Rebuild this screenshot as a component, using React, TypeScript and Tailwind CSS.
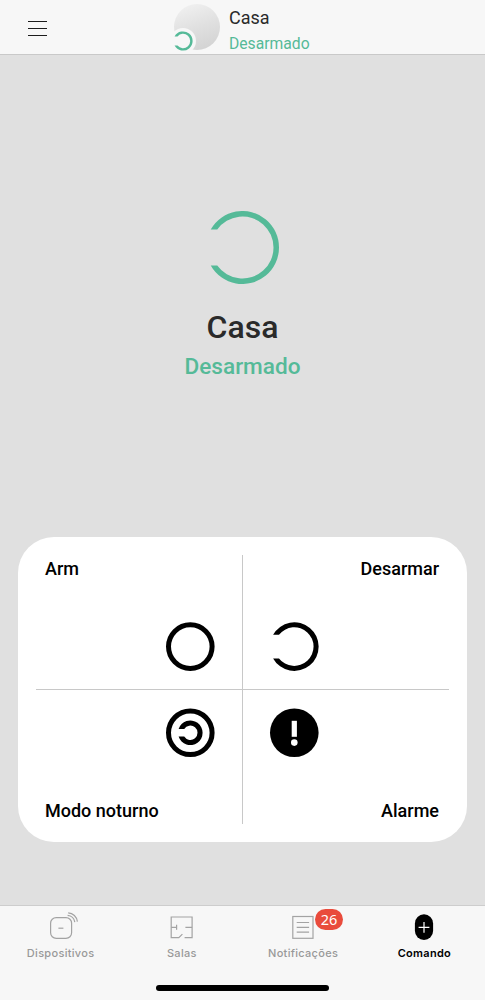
import React from 'react';

interface OpenRingProps {
  outer: number;
  inner: number;
  gap: number;
  className?: string;
}

// Ring with a slot cut out of its left side
function OpenRing({ outer, inner, gap, className }: OpenRingProps) {
  const xo = -Math.sqrt(outer * outer - gap * gap);
  const xi = -Math.sqrt(inner * inner - gap * gap);
  const d = `M${xo} ${-gap}A${outer} ${outer} 0 1 1 ${xo} ${gap}L${xi} ${gap}A${inner} ${inner} 0 1 0 ${xi} ${-gap}Z`;
  const size = Math.ceil(outer * 2);

  return (
    <svg
      width={size}
      height={size}
      viewBox={`${-size / 2} ${-size / 2} ${size} ${size}`}
      fill="currentColor"
      className={className}
    >
      <path d={d} />
    </svg>
  );
}

function ArmIcon() {
  return (
    <svg width="50" height="50" viewBox="-25.3 -25.6 50 50" fill="none" stroke="currentColor">
      <circle r="21.8" strokeWidth="5" />
    </svg>
  );
}

function DisarmIcon() {
  return (
    <svg width="50" height="50" viewBox="-25.3 -25.6 50 50" fill="currentColor">
      <path d="M-21.2 -11.8A24.3 24.3 0 1 1 -21.2 11.8L-15.3 11.8A19.3 19.3 0 1 0 -15.3 -11.8Z" />
    </svg>
  );
}

function NightIcon() {
  return (
    <svg width="50" height="50" viewBox="-25.3 -24.8 50 50" fill="currentColor">
      <circle r="21.8" strokeWidth="5" fill="none" stroke="currentColor" />
      <path d="M-11.7 -3.8A12.3 12.3 0 1 1 -11.7 3.8L-6.1 3.8A7.2 7.2 0 1 0 -6.1 -3.8Z" />
    </svg>
  );
}

function AlarmIcon() {
  return (
    <svg width="50" height="50" viewBox="-25.3 -24.8 50 50">
      <circle r="24.3" fill="#000" />
      <rect x="-2.6" y="-12" width="5.2" height="16" fill="#fff" />
      <circle cy="9.8" r="3.3" fill="#fff" />
    </svg>
  );
}

function DevicesIcon() {
  return (
    <svg width="40" height="32" viewBox="0 0 40 32" fill="none" stroke="#a3a3a3" strokeWidth="1.2">
      <rect x="9.6" y="7.6" width="21" height="20.8" rx="5.6" />
      <path d="M17.4 18.2h5" />
      <path d="M27.2 2.8A10 10 0 0 1 36.4 11.6M26.6 5.4A7.8 7.8 0 0 1 33.8 12.2" />
    </svg>
  );
}

function RoomsIcon() {
  return (
    <svg width="40" height="32" viewBox="0 0 40 32" fill="none" stroke="#a3a3a3" strokeWidth="1.2">
      <path d="M22.6 27.6h7.5V7H9.2v20.6h7.6l3.6-3.5" />
      <path d="M9.2 17.4h5.2M14.6 14.8v5M23.4 17.4h6.7" />
    </svg>
  );
}

function NotificationsIcon() {
  return (
    <svg width="40" height="32" viewBox="0 0 40 32" fill="none" stroke="#a3a3a3" strokeWidth="1.2">
      <rect x="9.8" y="6.5" width="20.2" height="21.8" />
      <path d="M13.7 12.5h12.4M13.7 17.4h12.4M13.7 22.2h12.4" />
    </svg>
  );
}

function ControlIcon() {
  return (
    <svg width="40" height="32" viewBox="0 0 40 32">
      <rect x="10.9" y="4.3" width="18.2" height="25.6" rx="9.1" fill="#000" />
      <path d="M20 11.9v10.8M14.6 17.3h10.8" stroke="#fff" strokeWidth="1.2" />
    </svg>
  );
}

const tabs = [
  { label: 'Dispositivos', icon: <DevicesIcon /> },
  { label: 'Salas', icon: <RoomsIcon /> },
  { label: 'Notificações', icon: <NotificationsIcon />, badge: 26 },
  { label: 'Comando', icon: <ControlIcon />, active: true },
];

export default function App() {
  return (
    <div className="flex h-[1000px] w-[485px] flex-col overflow-hidden bg-[#e0e0e0] font-['Roboto',sans-serif]">
      <header className="flex h-[55px] shrink-0 items-start border-b border-[#c9c9c9] bg-[#f7f7f7]">
        <button className="mt-[21px] ml-[28px] flex w-[19px] flex-col gap-[6px]" aria-label="Menu">
          <span className="h-px w-full bg-[#1c1c1c]" />
          <span className="h-px w-full bg-[#1c1c1c]" />
          <span className="h-px w-full bg-[#1c1c1c]" />
        </button>

        <div className="ml-[127px] flex">
          <div className="relative mt-[4px] size-[46px] rounded-full bg-linear-160 from-[#f3f3f3] via-[#e0e0e0] to-[#d0d0d0]">
            <span className="absolute top-[24px] left-[-4px] flex size-[26px] items-center justify-center rounded-full bg-[#f7f7f7] text-[#55ba98]">
              <OpenRing outer={9.6} inner={7.2} gap={4.6} />
            </span>
          </div>
          <div className="ml-[9px] flex flex-col">
            <span className="mt-[6px] text-[18px] leading-[24px] text-[#2a2a2a]">Casa</span>
            <span className="mt-[4px] text-[15.7px] leading-[20px] text-[#55ba98]">Desarmado</span>
          </div>
        </div>
      </header>

      <main className="flex grow flex-col items-center px-[18px]">
        <OpenRing outer={36.5} inner={31} gap={18} className="mt-[156px] text-[#55ba98]" />
        <h1 className="mt-[23px] text-[32px] leading-[40px] font-medium text-[#2a2a2a]">Casa</h1>
        <p className="mt-[6px] text-[22.6px] leading-[28px] font-medium text-[#55ba98]">Desarmado</p>

        <section className="mt-auto mb-[63px] flex h-[305px] w-full flex-col rounded-[36px] bg-white px-[18px] py-[18px] text-[18px] leading-[24px] font-medium text-black">
          <div className="grid h-[134px] grid-cols-[206px_1px_206px]">
            <button className="flex flex-col justify-between pt-[2px] pr-[27px] pb-[18px] pl-[9px]">
              <span className="self-start">Arm</span>
              <span className="self-end"><ArmIcon /></span>
            </button>
            <span className="bg-[#c8c8c8]" />
            <button className="flex flex-col justify-between pt-[2px] pr-[10px] pb-[18px] pl-[26px]">
              <span className="self-end">Desarmar</span>
              <span className="self-start"><DisarmIcon /></span>
            </button>
          </div>
          <span className="h-px w-full bg-[#c8c8c8]" />
          <div className="grid h-[134px] grid-cols-[206px_1px_206px]">
            <button className="flex flex-col justify-between pt-[18px] pr-[27px] pb-px pl-[9px]">
              <span className="self-end"><NightIcon /></span>
              <span className="self-start">Modo noturno</span>
            </button>
            <span className="bg-[#c8c8c8]" />
            <button className="flex flex-col justify-between pt-[18px] pr-[10px] pb-px pl-[26px]">
              <span className="self-start"><AlarmIcon /></span>
              <span className="self-end">Alarme</span>
            </button>
          </div>
        </section>
      </main>

      <footer className="flex h-[95px] shrink-0 flex-col border-t border-[#cdcdcd] bg-[#f7f7f7]">
        <nav className="grid grid-cols-4 font-['Inter',sans-serif]">
          {tabs.map((tab) => (
            <button key={tab.label} className="flex flex-col items-center pt-[4px]">
              <span className="relative">
                {tab.icon}
                {tab.badge && (
                  <span className="absolute -top-px left-[32px] flex h-[21px] w-[28px] items-center justify-center rounded-full bg-[#e94b3c] font-['Noto_Sans',sans-serif] text-[14.5px] leading-none text-white">
                    {tab.badge}
                  </span>
                )}
              </span>
              <span
                className={`mt-[3px] text-[11px] leading-[16px] tracking-[0.3px] ${
                  tab.active ? 'font-semibold text-black' : 'font-medium text-[#999]'
                }`}
              >
                {tab.label}
              </span>
            </button>
          ))}
        </nav>
        <div className="mx-auto mt-auto mb-[9px] h-[6px] w-[173px] rounded-full bg-black" />
      </footer>
    </div>
  );
}
